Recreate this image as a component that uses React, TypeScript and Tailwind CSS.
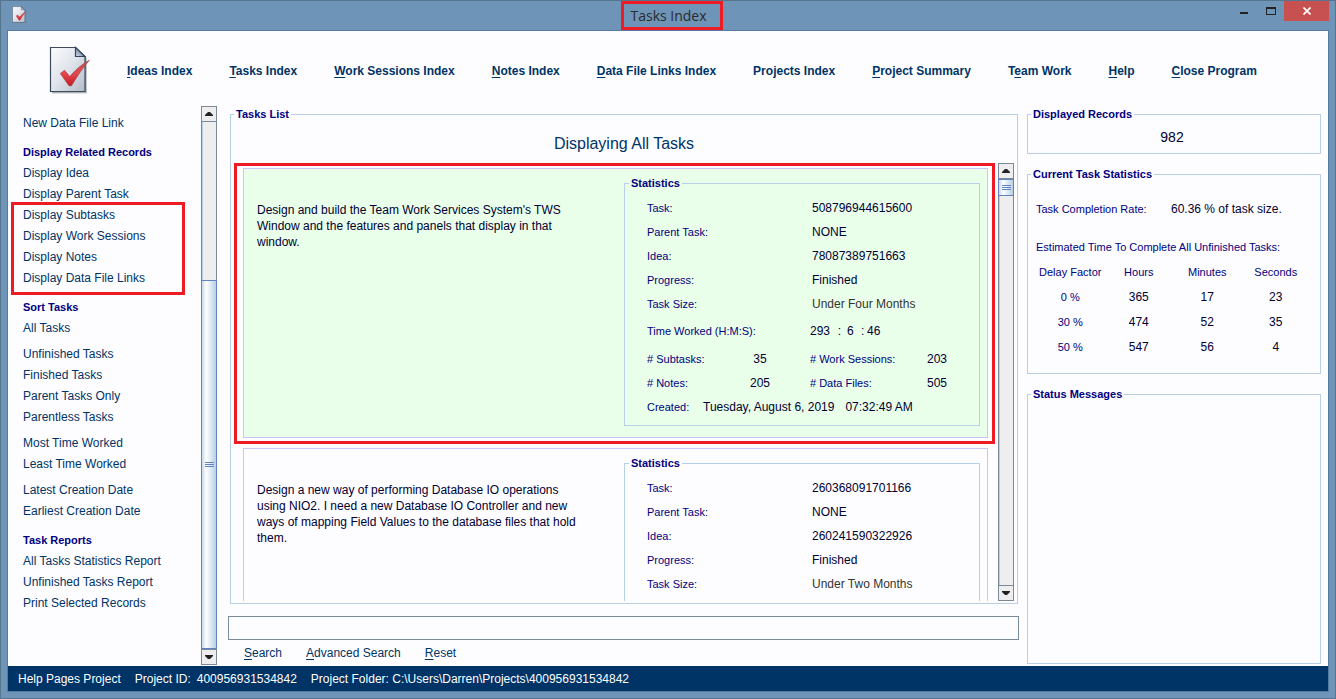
import type { ReactNode } from "react";

type NavItem = { before?: string; key: string; after: string };

const NAV: NavItem[] = [
  { key: "I", after: "deas Index" },
  { key: "T", after: "asks Index" },
  { key: "W", after: "ork Sessions Index" },
  { key: "N", after: "otes Index" },
  { key: "D", after: "ata File Links Index" },
  { before: "Pro", key: "j", after: "ects Index" },
  { key: "P", after: "roject Summary" },
  { before: "T", key: "e", after: "am Work" },
  { key: "H", after: "elp" },
  { key: "C", after: "lose Program" },
];

type TaskTotals = {
  time: [string, string, string];
  subtasks: string;
  sessions: string;
  notes: string;
  files: string;
  date: string;
  clock: string;
};

type Task = {
  text: string;
  id: string;
  parent: string;
  idea: string;
  progress: string;
  size: string;
  totals?: TaskTotals;
  selected: boolean;
};

const TASKS: Task[] = [
  {
    text: "Design and build the Team Work Services System's TWS Window and the features and panels that display in that window.",
    id: "508796944615600",
    parent: "NONE",
    idea: "78087389751663",
    progress: "Finished",
    size: "Under Four Months",
    totals: {
      time: ["293", "6", "46"],
      subtasks: "35",
      sessions: "203",
      notes: "205",
      files: "505",
      date: "Tuesday, August 6, 2019",
      clock: "07:32:49 AM",
    },
    selected: true,
  },
  {
    text: "Design a new way of performing Database IO operations using NIO2. I need a new Database IO Controller and new ways of mapping Field Values to the database files that hold them.",
    id: "260368091701166",
    parent: "NONE",
    idea: "260241590322926",
    progress: "Finished",
    size: "Under Two Months",
    selected: false,
  },
];

const ESTIMATES = [
  ["0 %", "365", "17", "23"],
  ["30 %", "474", "52", "35"],
  ["50 %", "547", "56", "4"],
];

function PageIcon({ className }: { className: string }) {
  return (
    <svg viewBox="0 0 42 50" className={className} aria-hidden="true">
      <defs>
        <linearGradient id="sheet" x1="0" y1="0" x2="1" y2="1">
          <stop offset="0" stopColor="#fbfcfd" />
          <stop offset="0.5" stopColor="#dfe3ea" />
          <stop offset="1" stopColor="#b4bcc9" />
        </linearGradient>
        <linearGradient id="fold" x1="0" y1="1" x2="1" y2="0">
          <stop offset="0" stopColor="#d3deee" />
          <stop offset="1" stopColor="#3f5677" />
        </linearGradient>
        <linearGradient id="tick" x1="0" y1="0" x2="0" y2="1">
          <stop offset="0" stopColor="#b9585c" />
          <stop offset="0.5" stopColor="#e5484d" />
          <stop offset="1" stopColor="#c41d25" />
        </linearGradient>
      </defs>
      <path d="M3 3H28L38 12V47.500H3Z" fill="#808791" opacity="0.45" />
      <path d="M2.500 2.500H27.500L37 11.500V46.500H2.500Z" fill="#5c6470" opacity="0.5" />
      <path d="M1.500 1.500H26.500L36 11V45.500H1.500Z" fill="url(#sheet)" stroke="#3d4b60" strokeWidth="1.200" />
      <path d="M26.500 1.500V10.500H36Z" fill="url(#fold)" stroke="#34445e" strokeWidth="1.200" />
      <path
        d="M11.300 27.500L15.500 24.300L20.800 30.500C26 24.500 33 18 40.300 14.200C34.500 21 28.500 29.500 22.500 39.800H20Z"
        fill="url(#tick)"
        stroke="#9c3a40"
        strokeWidth="0.600"
      />
    </svg>
  );
}

function Group({ title, className = "", children }: { title: string; className?: string; children?: ReactNode }) {
  return (
    <fieldset className={`min-w-0 border border-[#b8cfe5] px-[3px] ${className}`}>
      <legend className="px-[2px] text-[11px] leading-[14px] font-bold text-[#000080]">{title}</legend>
      {children}
    </fieldset>
  );
}

function ArrowButton({ down = false }: { down?: boolean }) {
  return (
    <button
      type="button"
      aria-label={down ? "Scroll down" : "Scroll up"}
      className="flex h-4 w-full shrink-0 items-center justify-center border-y border-[#7a8a99] bg-[#eeeeee]"
    >
      <svg viewBox="0 0 8 4" className="h-1 w-2" aria-hidden="true">
        <path d={down ? "M0 0H8V1L5 4H3L0 1Z" : "M0 4H8V3L5 0H3L0 3Z"} fill="#222222" />
      </svg>
    </button>
  );
}

function ScrollBar({ before, thumb, after }: { before: string; thumb: string; after: string }) {
  return (
    <div className="flex w-4 shrink-0 flex-col border-x border-[#7a8a99] bg-[#eeeeee]">
      <ArrowButton />
      <div className={`${before} border-l border-[#b8cfe5]`} />
      <div
        className={`${thumb} -mx-px flex flex-col items-center justify-center gap-px border border-[#6382bf] bg-linear-to-r from-[#c8d9ea] via-[#ffffff] via-30% to-[#b8cfe5]`}
      >
        <span className="h-px w-[9px] bg-[#6382bf]" />
        <span className="h-px w-[9px] bg-[#6382bf]" />
        <span className="h-px w-[9px] bg-[#6382bf]" />
      </div>
      <div className={`${after} border-l border-[#b8cfe5]`} />
      <ArrowButton down />
    </div>
  );
}

function SideHeading({ children }: { children: ReactNode }) {
  return <h2 className="mt-2 text-[11px] leading-[21px] font-bold text-[#000080]">{children}</h2>;
}

function SideLinks({ items, className = "" }: { items: string[]; className?: string }) {
  return (
    <ul className={className}>
      {items.map((item) => (
        <li key={item} className="h-[21px]">
          <a href="#" className="leading-[21px] whitespace-nowrap text-[#003366]">
            {item}
          </a>
        </li>
      ))}
    </ul>
  );
}

function Marker({ className }: { className: string }) {
  return <span aria-hidden="true" className={`pointer-events-none absolute border-[3px] border-[#ed1c24] ${className}`} />;
}

function StatRow({ label, value, muted = false }: { label: string; value: string; muted?: boolean }) {
  return (
    <div className="flex h-6 items-center">
      <dt className="w-[165px] text-[11px] text-[#000080]">{label}</dt>
      <dd className={muted ? "text-[#333333]" : ""}>{value}</dd>
    </div>
  );
}

function CountRow({ a, av, b, bv }: { a: string; av: string; b: string; bv: string }) {
  return (
    <div className="flex h-6 items-center">
      <dt className="w-[86px] text-[11px] text-[#000080]">{a}</dt>
      <dd className="w-[54px] text-center">{av}</dd>
      <dt className="ml-[23px] w-[100px] text-[11px] text-[#000080]">{b}</dt>
      <dd className="w-[54px] text-center">{bv}</dd>
    </div>
  );
}

function Totals({ totals }: { totals: TaskTotals }) {
  const [hours, minutes, seconds] = totals.time;
  return (
    <>
      <div className="mt-[3px] mb-1 flex h-6 items-center">
        <dt className="w-[163px] text-[11px] text-[#000080]">Time Worked (H:M:S):</dt>
        <dd className="flex">
          <span className="w-[22px]">{hours}</span>
          <span className="w-[15px] text-center">:</span>
          <span className="w-[7px]">{minutes}</span>
          <span className="w-[13px] pl-[7px]">:</span>
          <span>{seconds}</span>
        </dd>
      </div>
      <CountRow a="# Subtasks:" av={totals.subtasks} b="# Work Sessions:" bv={totals.sessions} />
      <CountRow a="# Notes:" av={totals.notes} b="# Data Files:" bv={totals.files} />
      <div className="flex h-6 items-center">
        <dt className="w-[56px] text-[11px] text-[#000080]">Created:</dt>
        <dd className="flex gap-[11px] whitespace-nowrap">
          <span>{totals.date}</span>
          <span>{totals.clock}</span>
        </dd>
      </div>
    </>
  );
}

function TaskCard({ task }: { task: Task }) {
  return (
    <article
      className={`relative flex h-[270px] shrink-0 justify-between border border-[#c8c8f8] pt-[7px] pr-[7px] pl-[13px] ${
        task.selected ? "bg-[#eaffea]" : "bg-[#fdfdff]"
      }`}
    >
      {task.selected && <Marker className="-top-[6px] -right-[8px] -bottom-[7px] -left-[10px]" />}
      <p className="w-[328px] pt-[26px] leading-4">{task.text}</p>
      <Group title="Statistics" className="h-[250px] w-[356px] pl-[4px]">
        <dl className="pt-[6px] pl-[18px]">
          <StatRow label="Task:" value={task.id} />
          <StatRow label="Parent Task:" value={task.parent} />
          <StatRow label="Idea:" value={task.idea} />
          <StatRow label="Progress:" value={task.progress} />
          <StatRow label="Task Size:" value={task.size} muted />
          {task.totals && <Totals totals={task.totals} />}
        </dl>
      </Group>
    </article>
  );
}

function TitleBar() {
  return (
    <header className="flex h-[29px] shrink-0 items-start">
      <div className="flex flex-1 pt-[5px] pl-[11px]">
        <PageIcon className="h-[18px] w-[15px]" />
      </div>
      <h1 className="relative mr-1 flex h-[29px] items-center font-['Open_Sans','Noto_Sans',sans-serif] text-[14px] text-[#2b2b2b]">
        Tasks Index
        <Marker className="top-0 -right-[16px] bottom-0 -left-[9px]" />
      </h1>
      <div className="flex flex-1 justify-end pr-[6px]">
        <button type="button" aria-label="Minimize" className="flex h-5 w-[27px] items-center justify-center">
          <svg viewBox="0 0 8 3" className="mt-1 h-[3px] w-2" aria-hidden="true">
            <path d="M0 0H8V2H0Z" fill="#222222" />
          </svg>
        </button>
        <button type="button" aria-label="Maximize" className="flex h-5 w-[27px] items-center justify-center">
          <svg viewBox="0 0 10 8" className="h-2 w-[10px]" aria-hidden="true">
            <path d="M0 0H10V8H0ZM1 2V7H9V2Z" fill="#222222" fillRule="evenodd" />
          </svg>
        </button>
        <button type="button" aria-label="Close" className="flex h-5 w-[45px] items-center justify-center bg-[#c75050]">
          <svg viewBox="0 0 8 8" className="h-2 w-2" aria-hidden="true">
            <path d="M0.500 0.500L7.500 7.500M7.500 0.500L0.500 7.500" stroke="#ffffff" strokeWidth="1.700" />
          </svg>
        </button>
      </div>
    </header>
  );
}

export default function App() {
  return (
    <div className="flex h-screen min-h-[640px] flex-col border border-[#55758f] bg-[#6e94b7] font-['Liberation_Sans',Arial,sans-serif] text-[12px] text-[#000033]">
      <TitleBar />
      <div className="mx-[6px] mb-[6px] flex min-h-0 flex-1 flex-col border border-[#557c9f] bg-[#fdfdff]">
        <nav className="flex h-[75px] shrink-0 items-center pt-1 pl-[41px]">
          <PageIcon className="h-[50px] w-[42px]" />
          <ul className="ml-[36px] flex gap-[37px] text-[12px] font-bold whitespace-nowrap text-[#003366]">
            {NAV.map((n) => (
              <li key={n.after}>
                <a href="#">
                  {n.before}
                  <span className={n.key === "j" ? "" : "underline underline-offset-2"}>{n.key}</span>
                  {n.after}
                </a>
              </li>
            ))}
          </ul>
        </nav>

        <div className="flex min-h-0 flex-1">
          <aside className="flex w-[209px] shrink-0 pb-px">
            <div className="flex-1 overflow-hidden pt-[7px] pl-[3px]">
              <div className="pl-3">
                <SideLinks items={["New Data File Link"]} />
                <SideHeading>Display Related Records</SideHeading>
                <SideLinks items={["Display Idea", "Display Parent Task"]} />
                <div className="relative">
                  <SideLinks
                    items={["Display Subtasks", "Display Work Sessions", "Display Notes", "Display Data File Links"]}
                  />
                  <Marker className="-top-[3px] right-[16px] -bottom-[6px] -left-[12px]" />
                </div>
                <SideHeading>Sort Tasks</SideHeading>
                <SideLinks items={["All Tasks"]} />
                <SideLinks
                  className="mt-[5px]"
                  items={["Unfinished Tasks", "Finished Tasks", "Parent Tasks Only", "Parentless Tasks"]}
                />
                <SideLinks className="mt-[5px]" items={["Most Time Worked", "Least Time Worked"]} />
                <SideLinks className="mt-[5px]" items={["Latest Creation Date", "Earliest Creation Date"]} />
                <SideHeading>Task Reports</SideHeading>
                <SideLinks
                  items={["All Tasks Statistics Report", "Unfinished Tasks Report", "Print Selected Records"]}
                />
              </div>
            </div>
            <ScrollBar before="grow-[30] basis-0" thumb="grow-[70] basis-0" after="" />
          </aside>

          <main className="ml-[11px] flex min-w-0 flex-1 flex-col pt-px">
            <Group title="Tasks List" className="mr-px ml-[2px] flex min-h-0 flex-1 flex-col pb-[2px]">
              <div className="flex h-full min-h-0 flex-col">
                <h2 className="h-[42px] shrink-0 pt-[11px] text-center text-[16px] leading-6 text-[#003366]">
                  Displaying All Tasks
                </h2>
                <div className="flex min-h-0 flex-1">
                  <div className="flex min-w-0 flex-1 flex-col gap-[10px] overflow-hidden pt-[5px] pr-[10px] pl-[9px]">
                    {TASKS.map((t) => (
                      <TaskCard key={t.id} task={t} />
                    ))}
                  </div>
                  <ScrollBar before="" thumb="h-[17px]" after="flex-1" />
                </div>
              </div>
            </Group>
            <form className="flex h-[62px] shrink-0 flex-col pt-3" onSubmit={(e) => e.preventDefault()}>
              <input
                type="text"
                aria-label="Search tasks"
                className="h-6 w-full shrink-0 border border-[#7a8a99] bg-[#fdfdff] px-1 outline-none"
              />
              <div className="flex h-[26px] items-center gap-[24px] pl-4 text-[#003366]">
                <button type="submit">
                  <span className="underline underline-offset-2">S</span>earch
                </button>
                <button type="button">
                  <span className="underline underline-offset-2">A</span>dvanced Search
                </button>
                <button type="reset">
                  <span className="underline underline-offset-2">R</span>eset
                </button>
              </div>
            </form>
          </main>

          <aside className="mr-[7px] ml-2 flex w-[294px] shrink-0 flex-col gap-[13px] pt-px pb-[2px]">
            <Group title="Displayed Records" className="h-[47px]">
              <p className="pt-[7px] pr-1 text-center text-[14px] leading-[18px]">982</p>
            </Group>
            <Group title="Current Task Statistics" className="h-[207px]">
              <div className="px-[5px] pt-[20px]">
                <p className="flex h-4 items-center">
                  <span className="w-[135px] text-[11px] text-[#000080]">Task Completion Rate:</span>
                  <span>60.36 % of task size.</span>
                </p>
                <p className="mt-[22px] text-[11px] leading-4 text-[#000080]">
                  Estimated Time To Complete All Unfinished Tasks:
                </p>
                <table className="mt-1 w-[274px] table-fixed text-center">
                  <thead>
                    <tr className="h-[25px] text-[11px] text-[#000080]">
                      {["Delay Factor", "Hours", "Minutes", "Seconds"].map((h) => (
                        <th key={h} scope="col" className="pt-px font-normal">
                          {h}
                        </th>
                      ))}
                    </tr>
                  </thead>
                  <tbody>
                    {ESTIMATES.map(([delay, ...rest]) => (
                      <tr key={delay} className="h-[25px]">
                        <th scope="row" className="pt-px text-[11px] font-normal text-[#000080]">
                          {delay}
                        </th>
                        {rest.map((v) => (
                          <td key={v}>{v}</td>
                        ))}
                      </tr>
                    ))}
                  </tbody>
                </table>
              </div>
            </Group>
            <Group title="Status Messages" className="flex-1" />
          </aside>
        </div>

        <footer className="flex h-[25px] shrink-0 items-center gap-[14px] bg-[#003366] pl-[10px] whitespace-nowrap text-white">
          <span>Help Pages Project</span>
          <span className="flex gap-[6px]">
            <span>Project ID:</span>
            <span>400956931534842</span>
          </span>
          <span>Project Folder: C:\Users\Darren\Projects\400956931534842</span>
        </footer>
      </div>
    </div>
  );
}
